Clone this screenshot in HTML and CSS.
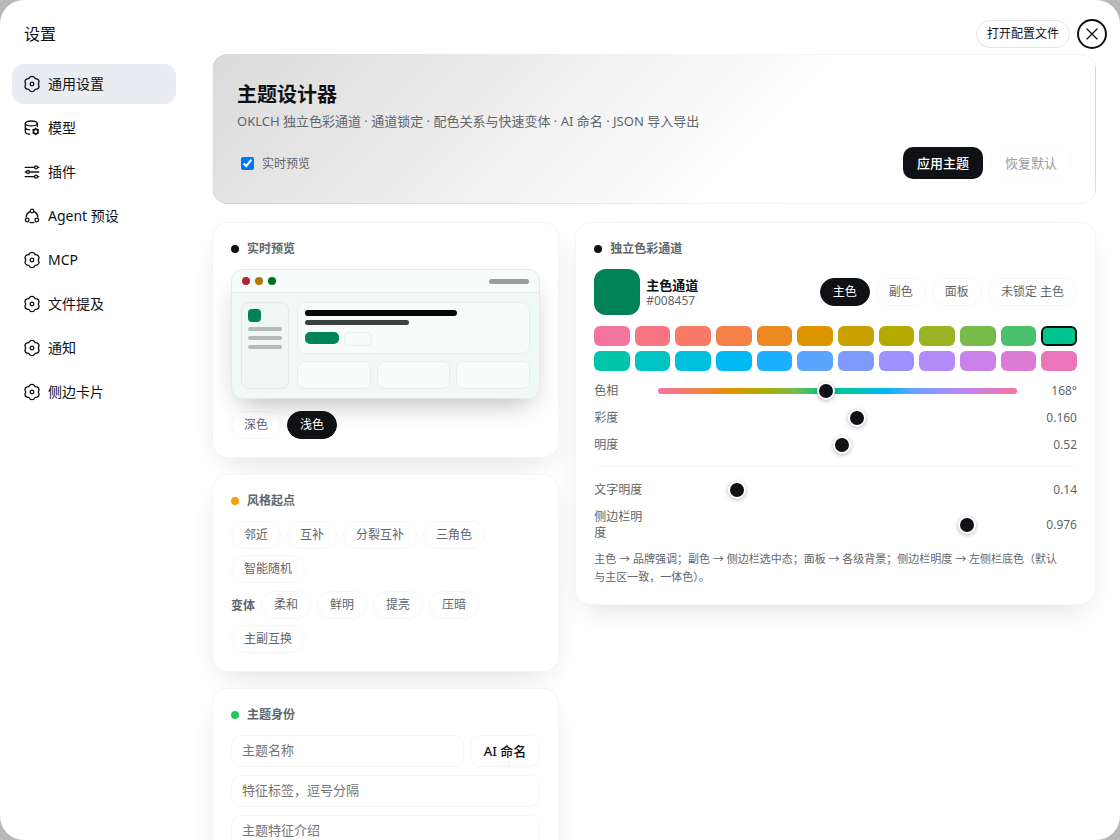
FILE: index.html
```html
<!DOCTYPE html>
<html lang="zh-CN">
<head>
<meta charset="utf-8">
<meta name="viewport" content="width=device-width, initial-scale=1">
<title>设置</title>
<link rel="stylesheet" href="styles.css">
</head>
<body>
<svg class="sprite" aria-hidden="true">
  <symbol id="gear" viewBox="0 0 16 16" overflow="visible">
    <path d="M6.02 1.08Q8-.3 9.98 1.08Q10.8 3.15 13 2.82Q15.27 3.8 14.98 6.26Q13.6 8 14.98 9.74Q15.27 12.2 13 13.18Q10.8 12.85 9.98 14.92Q8 16.3 6.02 14.92Q5.2 12.85 3 13.18Q.73 12.2 1.02 9.74Q2.4 8 1.02 6.26Q.73 3.8 3 2.82Q5.2 3.15 6.02 1.08Z"/>
    <circle cx="8" cy="8" r="1.8"/>
  </symbol>
  <symbol id="database" viewBox="0 0 16 16">
    <ellipse cx="7.3" cy="3.4" rx="6" ry="2.4"/>
    <path d="M1.3 3.4v8.4c0 1.2 1.8 2.2 4.4 2.4M13.3 3.4v3.2M1.3 7.6c0 1.2 1.8 2.1 4.4 2.3"/>
    <circle cx="11.7" cy="11.4" r="2.3" stroke-width="1.6"/>
    <path d="M11.7 8.2v1M11.7 13.6v1M8.9 9.8l.9.5M13.6 12.5l.9.5M8.9 13l.9-.5M13.6 10.3l.9-.5"/>
  </symbol>
  <symbol id="sliders" viewBox="0 0 16 16">
    <path d="M1.2 3.3h9M13.8 3.3h1M1.2 8h1M5.8 8h9M1.2 12.7h9M13.8 12.7h1"/>
    <circle cx="12" cy="3.3" r="1.5"/><circle cx="4" cy="8" r="1.5"/><circle cx="12" cy="12.7" r="1.5"/>
  </symbol>
  <symbol id="agents" viewBox="0 0 16 16">
    <circle cx="8" cy="3" r="1.8"/><circle cx="3.2" cy="12" r="1.8"/><circle cx="12.8" cy="12" r="1.8"/>
    <path d="M5.4 3.8C3.5 4.8 2.3 6.6 2.2 9M10.6 3.8c1.9 1 3.1 2.8 3.2 5.2M6 14.3c1.3.4 2.7.4 4 0"/>
  </symbol>
  <symbol id="close" viewBox="0 0 16 16"><path d="M3 3l10 10M13 3L3 13"/></symbol>
</svg>

<div class="dialog" role="dialog" aria-labelledby="dialog-title">
  <header class="dialog-head">
    <h1 id="dialog-title" class="dialog-title">设置</h1>
    <div class="dialog-actions">
      <button type="button" class="open-config">打开配置文件</button>
      <button type="button" class="close" aria-label="关闭"><svg class="icon"><use href="#close"/></svg></button>
    </div>
  </header>

  <div class="dialog-body">
    <nav class="nav">
      <button type="button" class="nav-item active"><svg class="icon"><use href="#gear"/></svg>通用设置</button>
      <button type="button" class="nav-item"><svg class="icon"><use href="#database"/></svg>模型</button>
      <button type="button" class="nav-item"><svg class="icon"><use href="#sliders"/></svg>插件</button>
      <button type="button" class="nav-item"><svg class="icon"><use href="#agents"/></svg>Agent 预设</button>
      <button type="button" class="nav-item"><svg class="icon"><use href="#gear"/></svg>MCP</button>
      <button type="button" class="nav-item"><svg class="icon"><use href="#gear"/></svg>文件提及</button>
      <button type="button" class="nav-item"><svg class="icon"><use href="#gear"/></svg>通知</button>
      <button type="button" class="nav-item"><svg class="icon"><use href="#gear"/></svg>侧边卡片</button>
    </nav>

    <main class="content">
      <section class="hero">
        <h2 class="hero-title">主题设计器</h2>
        <p class="hero-desc">OKLCH 独立色彩通道 · 通道锁定 · 配色关系与快速变体 · AI 命名 · JSON 导入导出</p>
        <div class="hero-row">
          <label class="live"><input type="checkbox" checked>实时预览</label>
          <div class="hero-actions">
            <button type="button" class="btn btn-primary">应用主题</button>
            <button type="button" class="btn btn-muted" disabled>恢复默认</button>
          </div>
        </div>
      </section>

      <div class="columns">
        <div class="column">
          <section class="card">
            <h3 class="card-title"><span class="dot"></span>实时预览</h3>
            <div class="mock">
              <div class="mock-bar"><i class="light red"></i><i class="light amber"></i><i class="light green"></i><i class="mock-pill"></i></div>
              <div class="mock-body">
                <div class="mock-side"><i class="mock-logo"></i><i class="mock-line"></i><i class="mock-line"></i><i class="mock-line"></i></div>
                <div class="mock-main">
                  <div class="mock-hero">
                    <i class="mock-h1"></i><i class="mock-h2"></i>
                    <div class="mock-buttons"><i class="mock-solid"></i><i class="mock-ghost"></i></div>
                  </div>
                  <div class="mock-tiles"><i></i><i></i><i></i></div>
                </div>
              </div>
            </div>
            <div class="chips">
              <button type="button" class="chip">深色</button>
              <button type="button" class="chip on">浅色</button>
            </div>
          </section>

          <section class="card">
            <h3 class="card-title"><span class="dot dot-amber"></span>风格起点</h3>
            <div class="chips-stack">
              <div class="chips">
                <button type="button" class="chip">邻近</button>
                <button type="button" class="chip">互补</button>
                <button type="button" class="chip">分裂互补</button>
                <button type="button" class="chip">三角色</button>
                <button type="button" class="chip">智能随机</button>
              </div>
              <div class="chips">
                <span class="chips-label">变体</span>
                <button type="button" class="chip">柔和</button>
                <button type="button" class="chip">鲜明</button>
                <button type="button" class="chip">提亮</button>
                <button type="button" class="chip">压暗</button>
                <button type="button" class="chip">主副互换</button>
              </div>
            </div>
          </section>

          <section class="card">
            <h3 class="card-title"><span class="dot dot-green"></span>主题身份</h3>
            <div class="fields">
              <div class="name-row">
                <input class="field" type="text" placeholder="主题名称" aria-label="主题名称">
                <button type="button" class="btn btn-outline">AI 命名</button>
              </div>
              <input class="field" type="text" placeholder="特征标签，逗号分隔" aria-label="特征标签">
              <textarea class="field area" placeholder="主题特征介绍" aria-label="主题特征介绍"></textarea>
            </div>
          </section>
        </div>

        <div class="column">
          <section class="card">
            <h3 class="card-title"><span class="dot"></span>独立色彩通道</h3>
            <div class="channel">
              <span class="channel-swatch"></span>
              <div class="channel-text"><strong class="channel-name">主色通道</strong><span class="channel-hex">#008457</span></div>
              <div class="chips channel-chips">
                <button type="button" class="chip on">主色</button>
                <button type="button" class="chip">副色</button>
                <button type="button" class="chip">面板</button>
                <button type="button" class="chip">未锁定 主色</button>
              </div>
            </div>
            <div class="swatches">
              <button type="button" class="swatch" aria-label="色相 0" style="background:#f2749f"></button>
              <button type="button" class="swatch" aria-label="色相 15" style="background:#f87684"></button>
              <button type="button" class="swatch" aria-label="色相 30" style="background:#f97a67"></button>
              <button type="button" class="swatch" aria-label="色相 45" style="background:#f48148"></button>
              <button type="button" class="swatch" aria-label="色相 60" style="background:#eb8a21"></button>
              <button type="button" class="swatch" aria-label="色相 75" style="background:#dd9500"></button>
              <button type="button" class="swatch" aria-label="色相 90" style="background:#caa000"></button>
              <button type="button" class="swatch" aria-label="色相 105" style="background:#b4aa00"></button>
              <button type="button" class="swatch" aria-label="色相 120" style="background:#9ab424"></button>
              <button type="button" class="swatch" aria-label="色相 135" style="background:#78bb4b"></button>
              <button type="button" class="swatch" aria-label="色相 150" style="background:#4bc16e"></button>
              <button type="button" class="swatch picked" aria-label="色相 165" style="background:#00c48e"></button>
              <button type="button" class="swatch" aria-label="色相 180" style="background:#00c5aa"></button>
              <button type="button" class="swatch" aria-label="色相 195" style="background:#00c3c4"></button>
              <button type="button" class="swatch" aria-label="色相 210" style="background:#00bfdd"></button>
              <button type="button" class="swatch" aria-label="色相 225" style="background:#00b8f2"></button>
              <button type="button" class="swatch" aria-label="色相 240" style="background:#1aafff"></button>
              <button type="button" class="swatch" aria-label="色相 255" style="background:#5ba5ff"></button>
              <button type="button" class="swatch" aria-label="色相 270" style="background:#7e9bff"></button>
              <button type="button" class="swatch" aria-label="色相 285" style="background:#9b92ff"></button>
              <button type="button" class="swatch" aria-label="色相 300" style="background:#b48af8"></button>
              <button type="button" class="swatch" aria-label="色相 315" style="background:#ca82e8"></button>
              <button type="button" class="swatch" aria-label="色相 330" style="background:#db7bd3"></button>
              <button type="button" class="swatch" aria-label="色相 345" style="background:#e976ba"></button>
            </div>
            <div class="rows">
              <div class="row"><label for="hue">色相</label><input id="hue" class="range range-hue" type="range" min="0" max="360" value="168"><output for="hue">168°</output></div>
              <div class="row"><label for="chroma">彩度</label><input id="chroma" class="range" type="range" min="0" max="0.288" step="0.001" value="0.16"><output for="chroma">0.160</output></div>
              <div class="row"><label for="light">明度</label><input id="light" class="range" type="range" min="0.2" max="0.825" step="0.005" value="0.52"><output for="light">0.52</output></div>
            </div>
            <div class="rows rows-split">
              <div class="row"><label for="text-light">文字明度</label><input id="text-light" class="range" type="range" min="0.04" max="0.53" step="0.01" value="0.14"><output for="text-light">0.14</output></div>
              <div class="row"><label for="side-light">侧边栏明度</label><input id="side-light" class="range" type="range" min="0.8" max="1" step="0.001" value="0.976"><output for="side-light">0.976</output></div>
            </div>
            <p class="note">主色 → 品牌强调；副色 → 侧边栏选中态；面板 → 各级背景；侧边栏明度 → 左侧栏底色（默认与主区一致，一体色）。</p>
          </section>
        </div>
      </div>
    </main>
  </div>
</div>
</body>
</html>
```

FILE: styles.css
```css
:root {
  --ink: #0f1115;
  --muted: #61666b;
  --line: rgba(15, 17, 21, 0.04);
  --brand: #008457;
}

*, *::before, *::after { box-sizing: border-box; }

body {
  margin: 0;
  background: #b8b8b8;
  color: var(--ink);
  font-family: "Noto Sans", "Noto Sans CJK SC", sans-serif;
  font-size: 14px;
}

button, input, textarea { font: inherit; color: inherit; margin: 0; }
button { cursor: pointer; }
h1, h2, h3, p { margin: 0; }
i { display: block; }

.sprite { display: none; }

.icon {
  flex: none;
  width: 16px;
  height: 16px;
  overflow: visible;
  fill: none;
  stroke: currentColor;
  stroke-width: 1.3;
  stroke-linecap: round;
  stroke-linejoin: round;
}

.dialog {
  display: flex;
  flex-direction: column;
  height: 100vh;
  overflow: hidden;
  border-radius: 24px;
  background: #fff;
}

.dialog-head {
  display: flex;
  flex: none;
  align-items: center;
  justify-content: space-between;
  height: 54px;
  padding: 14px 13px 0 24px;
}

.dialog-title { font-size: 16px; font-weight: 400; line-height: 24px; }

.dialog-actions { display: flex; align-items: center; gap: 7px; }

.open-config {
  height: 28px;
  padding: 0 10px;
  border: 1px solid #e3e4e6;
  border-radius: 14px;
  background: #fff;
  font-size: 12px;
  line-height: 18px;
}

.close {
  display: grid;
  place-items: center;
  width: 30px;
  height: 30px;
  padding: 0;
  border: 2px solid var(--ink);
  border-radius: 50%;
  background: #fff;
}

.dialog-body { display: flex; flex: 1; min-height: 0; }

.nav {
  display: flex;
  flex: none;
  flex-direction: column;
  gap: 4px;
  width: 188px;
  padding: 10px 12px;
}

.nav-item {
  display: flex;
  align-items: center;
  gap: 8px;
  height: 40px;
  padding: 0 12px;
  border: 0;
  border-radius: 12px;
  background: transparent;
  line-height: 20px;
  text-align: left;
}

.nav-item.active { background: #e9edf2; }

.content {
  flex: 1;
  min-width: 0;
  padding: 0 24px;
  overflow-y: auto;
  scrollbar-width: none;
}

.hero {
  padding: 24px;
  border: 1px solid var(--line);
  border-radius: 16px;
  background-image: linear-gradient(135deg, #dadada, #fff 62%);
}

.hero-title { font-size: 20px; font-weight: 700; line-height: 32px; }

.hero-desc { color: var(--muted); font-size: 13px; line-height: 20px; }

.hero-row { display: flex; align-items: center; justify-content: space-between; margin-top: 16px; }

.live { display: flex; align-items: center; gap: 8px; padding-left: 4px; color: var(--muted); font-size: 12px; }
.live input { width: 13px; height: 13px; }

.hero-actions { display: flex; gap: 8px; }

.btn {
  height: 32px;
  padding: 0 13px;
  border: 1px solid var(--line);
  border-radius: 10px;
  background: transparent;
  font-size: 13px;
  font-weight: 500;
  line-height: 18px;
  white-space: nowrap;
}

.btn-primary { background: var(--ink); color: #fff; }
.btn-muted { border-color: rgba(15, 17, 21, 0.02); color: #9b9da0; font-weight: 400; }

.columns {
  display: grid;
  grid-template-columns: 2fr 3fr;
  align-items: start;
  gap: 16px;
  margin-top: 18px;
}

.column { display: flex; flex-direction: column; gap: 16px; min-width: 0; }

.card {
  padding: 18px;
  border: 1px solid var(--line);
  border-radius: 16px;
  background: #fff;
  box-shadow: 0 12px 32px -12px rgba(0, 0, 0, 0.16);
}

.card-title {
  display: flex;
  align-items: center;
  gap: 8px;
  margin-bottom: 12px;
  color: var(--muted);
  font-size: 12px;
  font-weight: 700;
  line-height: 16px;
}

.dot { width: 8px; height: 8px; border-radius: 50%; background: var(--ink); }
.dot-amber { background: #f59e0b; }
.dot-green { background: #22c55e; }

.chips { display: flex; flex-wrap: wrap; align-items: center; gap: 6px; }
.mock + .chips { margin-top: 12px; }
.chips-stack { display: flex; flex-direction: column; gap: 8px; }
.chips-label { color: var(--muted); font-size: 12px; font-weight: 600; }

.chip {
  height: 28px;
  padding: 0 12px;
  border: 1px solid var(--line);
  border-radius: 14px;
  background: transparent;
  color: var(--muted);
  font-size: 12px;
  line-height: 18px;
}

.chip.on { border-color: var(--ink); background: var(--ink); color: #fff; }

/* Miniature app window */
.mock {
  overflow: hidden;
  border: 1px solid #e3ebe8;
  border-radius: 12px;
  background: #f0f9f6;
  box-shadow: 0 12px 28px -10px rgba(0, 0, 0, 0.32);
}

.mock-bar {
  display: flex;
  align-items: center;
  gap: 5px;
  height: 23px;
  padding: 0 10px;
  border-bottom: 1px solid #e3ebe8;
  background: #f7fbfa;
}

.light { width: 8px; height: 8px; border-radius: 50%; }
.red { background: #b3262c; }
.amber { background: #b47400; }
.green { background: #007021; }
.mock-pill { width: 40px; height: 5px; margin-left: auto; border-radius: 3px; background: #999c9b; }

.mock-body { display: flex; gap: 8px; padding: 9px; }

.mock-side {
  display: flex;
  flex-direction: column;
  gap: 5px;
  width: 48px;
  padding: 6px;
  border: 1px solid #e3ebe8;
  border-radius: 8px;
  background: #eff8f5;
}

.mock-logo { width: 13px; height: 13px; border-radius: 4px; background: var(--brand); }
.mock-line { height: 4px; border-radius: 2px; background: #b4bbb8; }

.mock-main { display: flex; flex: 1; flex-direction: column; gap: 7px; }

.mock-hero {
  display: flex;
  flex-direction: column;
  gap: 4px;
  padding: 7px;
  border: 1px solid #e7eeeb;
  border-radius: 8px;
  background: #f7fbfa;
}

.mock-h1 { width: 70%; height: 6px; border-radius: 3px; background: #030a06; }
.mock-h2 { width: 48%; height: 5px; border-radius: 3px; background: #3b403e; }
.mock-buttons { display: flex; align-items: flex-start; gap: 5px; margin-top: 3px; }
.mock-solid { width: 34px; height: 12px; border-radius: 5px; background: var(--brand); }
.mock-ghost { width: 28px; height: 14px; border: 1px solid #e7eeeb; border-radius: 5px; }

.mock-tiles { display: grid; grid-template-columns: repeat(3, 1fr); gap: 6px; }
.mock-tiles i { height: 28px; border: 1px solid #e7eeeb; border-radius: 7px; background: #f7fbfa; }

/* Theme identity form */
.fields { display: flex; flex-direction: column; gap: 8px; }
.name-row { display: flex; gap: 6px; }

.field {
  width: 100%;
  min-width: 0;
  height: 32px;
  padding: 0 10px 2px;
  border: 1px solid var(--line);
  border-radius: 10px;
  background: transparent;
  font-size: 13px;
}

.name-row .field { flex: 1; }
.field::placeholder { color: #757575; }
.area { height: 72px; padding: 4px 10px; line-height: 20px; resize: none; }

/* Colour channels */
.channel { display: flex; align-items: center; gap: 6px; }
.channel-swatch { width: 46px; height: 46px; border: 1px solid var(--line); border-radius: 12px; background: var(--brand); }
.channel-text { display: flex; flex-direction: column; padding-top: 2px; }
.channel-name { font-size: 13px; font-weight: 600; line-height: 16px; }
.channel-hex { color: var(--muted); font-size: 12px; line-height: 16px; }
.channel-chips { margin-left: auto; }

.swatches { display: grid; grid-template-columns: repeat(12, 1fr); gap: 5px; margin-top: 11px; }
.swatch { height: 20px; padding: 0; border: 0; border-radius: 6px; }
.swatch.picked { border: 2px solid var(--ink); }

.rows { display: flex; flex-direction: column; gap: 7px; margin-top: 10px; }
.rows-split { margin-top: 11px; padding-top: 13px; border-top: 1px solid var(--line); }

.row {
  display: grid;
  grid-template-columns: 56px 1fr 52px;
  align-items: center;
  gap: 8px;
  padding: 2px 0;
  color: var(--muted);
  font-size: 12px;
  line-height: 16px;
}

.row output { text-align: right; }

.range {
  width: 100%;
  height: 6px;
  border-radius: 3px;
  appearance: none;
  background: transparent;
}

.range-hue {
  background: linear-gradient(90deg, #f2749f, #f48148 12%, #dd9500 20%, #b4aa00 29%, #78bb4b 38%, #00c48e 46%, #00c5aa 54%, #00b8f2 64%, #5ba5ff 70%, #9b92ff 79%, #ca82e8 88%, #f2749f);
}

.range::-webkit-slider-thumb {
  width: 18px;
  height: 18px;
  border: 2px solid #fff;
  border-radius: 50%;
  appearance: none;
  background: var(--ink);
  box-shadow: 0 1px 4px rgba(0, 0, 0, 0.3);
}

.note { margin-top: 7px; padding-right: 10px; color: var(--muted); font-size: 11px; line-height: 18px; }
```
